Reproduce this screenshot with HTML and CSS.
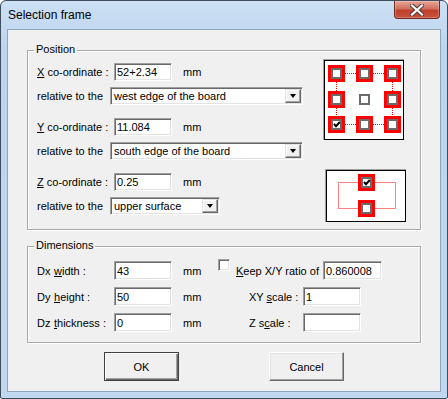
FILE: index.html
```html
<!DOCTYPE html>
<html lang="en">
<head>
    <meta charset="UTF-8">
    <title>Selection frame</title>
    <link rel="stylesheet" href="styles.css">
</head>
<body>
    <div class="window">
        <div class="titlebar">
            <span class="title">Selection frame</span>
            <button class="close" title="Close">
                <svg width="14" height="12" viewBox="0 0 14 12">
                    <path d="M2 1.5 L12 10.5 M12 1.5 L2 10.5" stroke="#4b3b38" stroke-width="4.2" stroke-linecap="square"/>
                    <path d="M2 1.5 L12 10.5 M12 1.5 L2 10.5" stroke="#fff" stroke-width="2.2" stroke-linecap="square"/>
                </svg>
            </button>
        </div>

        <div class="client">
            <div class="group group-position">
                <span class="group-title">Position</span>

                <div class="pos-form">
                    <div class="coord-block">
                        <div class="row">
                            <label class="lbl lbl-coord"><u>X</u> co-ordinate :</label>
                            <input class="field field-coord" type="text" value="52+2.34">
                            <span class="unit">mm</span>
                        </div>
                        <div class="row">
                            <span class="lbl lbl-rel">relative to the</span>
                            <div class="combo combo-wide">
                                <span class="combo-text">west edge of the board</span>
                                <span class="combo-btn"></span>
                            </div>
                        </div>
                    </div>

                    <div class="coord-block">
                        <div class="row">
                            <label class="lbl lbl-coord"><u>Y</u> co-ordinate :</label>
                            <input class="field field-coord" type="text" value="11.084">
                            <span class="unit">mm</span>
                        </div>
                        <div class="row">
                            <span class="lbl lbl-rel">relative to the</span>
                            <div class="combo combo-wide">
                                <span class="combo-text">south edge of the board</span>
                                <span class="combo-btn"></span>
                            </div>
                        </div>
                    </div>

                    <div class="coord-block">
                        <div class="row">
                            <label class="lbl lbl-coord"><u>Z</u> co-ordinate :</label>
                            <input class="field field-coord" type="text" value="0.25">
                            <span class="unit">mm</span>
                        </div>
                        <div class="row">
                            <span class="lbl lbl-rel">relative to the</span>
                            <div class="combo combo-short">
                                <span class="combo-text">upper surface</span>
                                <span class="combo-btn"></span>
                            </div>
                        </div>
                    </div>
                </div>

                <div class="pos-diagrams">
                    <svg class="diagram" width="81" height="81" viewBox="0 0 81 81">
                        <defs>
                            <g id="sq">
                                <rect width="17" height="17" fill="#ff0000"/>
                                <rect x="3" y="3" width="11" height="11" fill="#6b6b6b"/>
                                <rect x="5" y="5" width="7" height="7" fill="#fff"/>
                            </g>
                        </defs>
                        <rect width="81" height="81" fill="#a0a0a0"/>
                        <rect x="1.5" y="1.5" width="79" height="79" fill="#fff" stroke="#000"/>
                        <g stroke="#ff0000" stroke-dasharray="1 1">
                            <line x1="22" y1="14.5" x2="33" y2="14.5"/>
                            <line x1="50" y1="14.5" x2="61" y2="14.5"/>
                            <line x1="22" y1="65.5" x2="33" y2="65.5"/>
                            <line x1="50" y1="65.5" x2="61" y2="65.5"/>
                            <line x1="13.5" y1="23" x2="13.5" y2="32"/>
                            <line x1="13.5" y1="49" x2="13.5" y2="57"/>
                            <line x1="69.5" y1="23" x2="69.5" y2="32"/>
                            <line x1="69.5" y1="49" x2="69.5" y2="57"/>
                        </g>
                        <use href="#sq" x="5" y="6"/>
                        <use href="#sq" x="33" y="6"/>
                        <use href="#sq" x="61" y="6"/>
                        <use href="#sq" x="5" y="32"/>
                        <use href="#sq" x="61" y="32"/>
                        <use href="#sq" x="5" y="57"/>
                        <use href="#sq" x="33" y="57"/>
                        <use href="#sq" x="61" y="57"/>
                        <rect x="36" y="35" width="11" height="11" fill="#6b6b6b"/>
                        <rect x="38" y="37" width="7" height="7" fill="#fff"/>
                        <polyline points="11,65 13,67.2 16.8,63" fill="none" stroke="#000" stroke-width="2"/>
                    </svg>

                    <svg class="diagram diagram-z" width="81" height="53" viewBox="0 0 81 53">
                        <rect width="81" height="53" fill="#a0a0a0"/>
                        <rect x="1.5" y="1.5" width="79" height="51" fill="#fff" stroke="#000"/>
                        <rect x="13.5" y="13.5" width="57" height="26" fill="none" stroke="#ff0000" stroke-dasharray="1 1"/>
                        <use href="#sq" x="33" y="5"/>
                        <use href="#sq" x="33" y="31"/>
                        <polyline points="39,13 41,15.2 44.8,11" fill="none" stroke="#000" stroke-width="2"/>
                    </svg>
                </div>
            </div>

            <div class="group group-dims">
                <span class="group-title">Dimensions</span>

                <div class="dims-left">
                    <div class="row row-dim">
                        <label class="lbl lbl-dim"><span class="axis">Dx</span><u>w</u>idth :</label>
                        <input class="field field-dim" type="text" value="43">
                        <span class="unit">mm</span>
                    </div>
                    <div class="row row-dim">
                        <label class="lbl lbl-dim"><span class="axis">Dy</span><u>h</u>eight :</label>
                        <input class="field field-dim" type="text" value="50">
                        <span class="unit">mm</span>
                    </div>
                    <div class="row row-dim">
                        <label class="lbl lbl-dim"><span class="axis">Dz</span><u>t</u>hickness :</label>
                        <input class="field field-dim" type="text" value="0">
                        <span class="unit">mm</span>
                    </div>
                </div>

                <div class="dims-right">
                    <div class="row row-dim">
                        <span class="check"></span>
                        <label class="lbl lbl-keep"><u>K</u>eep X/Y ratio of</label>
                        <input class="field field-ratio" type="text" value="0.860008">
                    </div>
                    <div class="row row-dim row-scale">
                        <label class="lbl lbl-scale">XY <u>s</u>cale :</label>
                        <input class="field field-scale" type="text" value="1">
                    </div>
                    <div class="row row-dim row-scale">
                        <label class="lbl lbl-scale">Z s<u>c</u>ale :</label>
                        <input class="field field-scale" type="text" value="">
                    </div>
                </div>
            </div>

            <div class="button-row">
                <button class="btn btn-default">OK</button>
                <button class="btn">Cancel</button>
            </div>
        </div>
    </div>
</body>
</html>
```

FILE: styles.css
```css
* {
    box-sizing: border-box;
}

body {
    margin: 0;
    font-family: 'Liberation Sans', Arial, sans-serif;
    font-size: 11px;
    color: #000;
    background: #fff;
}

/* window chrome */
.window {
    width: 448px;
    height: 399px;
    border: 1px solid #3e4d5e;
    border-radius: 6px 6px 2px 2px;
    background: linear-gradient(180deg, #cde0f4 0%, #bcd4ee 12%, #c0d7ef 100%);
    padding: 0 6px 6px;
    display: flex;
    flex-direction: column;
}

.titlebar {
    height: 28px;
    display: flex;
    align-items: flex-start;
}

.title {
    font-size: 12px;
    line-height: 28px;
    padding-left: 1px;
    color: #000;
}

.close {
    margin-left: auto;
    margin-right: 1px;
    width: 46px;
    height: 18px;
    padding: 0;
    border: 1px solid #6e2a22;
    border-top: none;
    border-radius: 0 0 4px 4px;
    background: linear-gradient(180deg, #e6a596 0%, #d0705e 45%, #c0402c 55%, #c9523d 100%);
    box-shadow: inset 0 0 0 1px rgba(255, 255, 255, 0.25);
    display: flex;
    align-items: center;
    justify-content: center;
}

.client {
    flex: 1;
    border: 1px solid #8fa5bd;
    background: #f0f0f0;
    padding: 0 19px;
}

/* group boxes */
.group {
    position: relative;
    border: 1px solid #a9a9a9;
    box-shadow: inset 1px 1px 0 #fff, 1px 1px 0 #fff;
    display: flex;
}

.group-title {
    position: absolute;
    top: -8px;
    left: 6px;
    padding: 0 2px;
    line-height: 13px;
    background: #f0f0f0;
}

.group-position {
    margin-top: 20px;
    height: 180px;
    padding: 8px 16px 0 9px;
}

.group-dims {
    margin-top: 16px;
    height: 97px;
    padding: 14px 0 0 9px;
}

/* rows */
.pos-form {
    display: flex;
    flex-direction: column;
    gap: 13px;
    margin-top: 4px;
}

.coord-block {
    display: flex;
    flex-direction: column;
    gap: 6px;
}

.row {
    display: flex;
    align-items: center;
    height: 18px;
}

.lbl {
    white-space: nowrap;
}

.lbl-coord {
    width: 77px;
}

.lbl-rel {
    width: 73px;
}

.unit {
    margin-left: 11px;
}

/* edit fields */
.field {
    height: 18px;
    padding: 0 2px;
    font-family: inherit;
    font-size: 11px;
    color: #000;
    background: #fff;
    border: 1px solid;
    border-color: #a0a0a0 #fff #fff #a0a0a0;
    box-shadow: inset 1px 1px 0 #696969, inset -1px -1px 0 #e3e3e3;
    outline: none;
}

.field-coord {
    width: 58px;
}

/* combo boxes */
.combo {
    height: 18px;
    padding: 1px;
    display: flex;
    background: #fff;
    border: 1px solid;
    border-color: #a0a0a0 #fff #fff #a0a0a0;
    box-shadow: inset 1px 1px 0 #696969, inset -1px -1px 0 #e3e3e3;
}

.combo-wide {
    width: 193px;
}

.combo-short {
    width: 110px;
}

.combo-text {
    flex: 1;
    padding-left: 2px;
    line-height: 14px;
    white-space: nowrap;
}

.combo-btn {
    width: 16px;
    height: 14px;
    background: #f0f0f0;
    border: 1px solid;
    border-color: #e3e3e3 #696969 #696969 #e3e3e3;
    box-shadow: inset -1px -1px 0 #a0a0a0, inset 1px 1px 0 #fff;
    display: flex;
    align-items: center;
    justify-content: center;
}

.combo-btn::after {
    content: '';
    width: 0;
    height: 0;
    border-left: 3.5px solid transparent;
    border-right: 3.5px solid transparent;
    border-top: 4px solid #000;
}

/* diagrams */
.pos-diagrams {
    margin-left: auto;
    display: flex;
    flex-direction: column;
    gap: 29px;
}

.diagram {
    display: block;
}

.diagram-z {
    margin-left: 2px;
    margin-right: -2px;
}

/* dimensions */
.dims-left {
    width: 181px;
    display: flex;
    flex-direction: column;
    gap: 7px;
}

.dims-right {
    width: 164px;
    display: flex;
    flex-direction: column;
    gap: 7px;
}

.row-dim {
    height: 19px;
}

.lbl-dim {
    width: 77px;
}

.axis {
    display: inline-block;
    width: 17px;
}

.field-dim {
    width: 58px;
    height: 19px;
}

.check {
    width: 12px;
    height: 12px;
    align-self: flex-start;
    margin-top: -2px;
    background: #fff;
    border: 1px solid;
    border-color: #a0a0a0 #fff #fff #a0a0a0;
    box-shadow: inset 1px 1px 0 #696969, inset -1px -1px 0 #e3e3e3;
}

.lbl-keep {
    margin-left: 6px;
}

.field-ratio {
    margin-left: auto;
    width: 59px;
    height: 19px;
}

.row-scale {
    padding-left: 31px;
}

.lbl-scale {
    width: 54px;
}

.field-scale {
    width: 58px;
    height: 19px;
}

/* buttons */
.button-row {
    display: flex;
    gap: 90px;
    margin-top: 9px;
    padding-left: 77px;
}

.btn {
    width: 75px;
    height: 29px;
    padding: 0;
    font-family: inherit;
    font-size: 11px;
    color: #000;
    background: #f0f0f0;
    border: 1px solid;
    border-color: #fff #696969 #696969 #fff;
    box-shadow: inset -1px -1px 0 #a0a0a0, inset 1px 1px 0 #e3e3e3;
}

.btn-default {
    border-color: #404040;
    box-shadow: inset 1px 1px 0 #fff, inset -1px -1px 0 #696969, inset -2px -2px 0 #a0a0a0;
}
```
